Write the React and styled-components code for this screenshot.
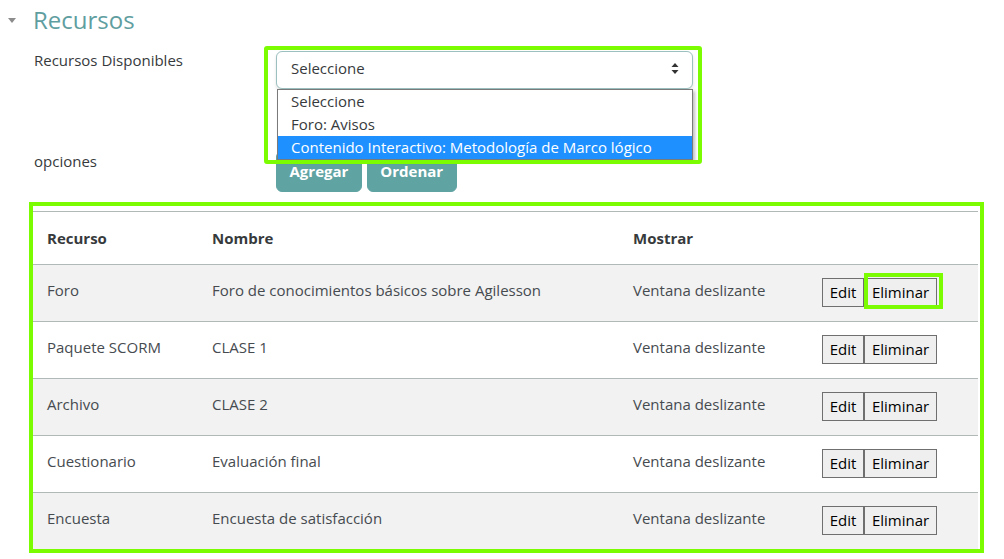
import React from "react";
import styled, { createGlobalStyle } from "styled-components";

const GREEN = "#7cfc00";
const TEAL = "#5fa3a3";
const LINE = "#b0b8b8";

const Global = createGlobalStyle`
  html, body { margin: 0; padding: 0; background: #fff; }
  body {
    font-family: "Open Sans", "Liberation Sans", sans-serif;
    font-size: 15px;
    line-height: 22.5px;
    color: #373a3c;
  }
  *, *::before, *::after { box-sizing: border-box; }
`;

const Page = styled.div`
  padding: 5px 0 0 8px;
  width: 1004px;
`;

const SectionHeader = styled.div`
  display: flex;
  align-items: center;
  height: 29px;
`;

const Caret = styled.span`
  width: 0;
  height: 0;
  border-left: 4.5px solid transparent;
  border-right: 4.5px solid transparent;
  border-top: 5px solid #8c8c8c;
  margin-right: 17px;
  margin-top: 1px;
`;

const Title = styled.h3`
  margin: 0;
  font-size: 24px;
  line-height: 29px;
  font-weight: 400;
  color: #5f9ea0;
`;

const FormRow = styled.div`
  display: grid;
  grid-template-columns: 242px 1fr;
  margin-left: 26px;
  margin-top: ${(p) => p.$mt}px;
`;

const Label = styled.div`
  padding-top: ${(p) => p.$pt || 0}px;
  color: #373a3c;
`;

const SelectWrap = styled.div`
  position: relative;
  width: 417px;
  margin-top: 2px;
  z-index: 2;
`;

const SelectBox = styled.div`
  height: 38px;
  border: 1px solid #9cc0c0;
  border-radius: 6px;
  background: #fff;
  box-shadow: 0 2px 3px rgba(0, 0, 0, 0.12);
  display: flex;
  align-items: center;
  justify-content: space-between;
  padding: 0 13px 3px 14px;
  color: #373a3c;
`;

const DropList = styled.ul`
  position: absolute;
  top: 38px;
  left: 1px;
  width: 416px;
  margin: 0;
  padding: 0;
  list-style: none;
  background: #fff;
  border: 1px solid #7a7a7a;
  box-shadow: 2px 2px 3px rgba(0, 0, 0, 0.25);
`;

const Option = styled.li`
  height: 23px;
  line-height: 22px;
  padding-left: 13px;
  background: ${(p) => (p.$active ? "#1e90ff" : "#fff")};
  color: ${(p) => (p.$active ? "#fff" : "#373a3c")};
  white-space: nowrap;
`;

const Highlight = styled.div`
  position: absolute;
  left: -12px;
  top: -5px;
  width: 438px;
  height: 118px;
  border: 4px solid ${GREEN};
  border-radius: 3px;
  pointer-events: none;
`;

const Actions = styled.div`
  display: flex;
  gap: 5px;
  margin-top: 1px;
`;

const ThemeButton = styled.button`
  font-family: inherit;
  font-size: 15px;
  font-weight: 700;
  line-height: 22.5px;
  color: #fff;
  background: ${TEAL};
  border: 1px solid ${TEAL};
  border-radius: 6px;
  padding: 8px 12.5px;
  cursor: pointer;
`;

const TableFrame = styled.div`
  margin: 10px 0 0 21px;
  width: 955px;
  border: 4px solid ${GREEN};
  padding: 5px 2px 0 0;
`;

const Row = styled.div`
  display: grid;
  grid-template-columns: 165px 421px 189px 1fr;
  border-top: 1px solid ${LINE};
  height: ${(p) => (p.$head ? 53 : 57)}px;
  background: ${(p) => (p.$shade ? "#f2f2f2" : "#fff")};
  font-weight: ${(p) => (p.$head ? 700 : 400)};
  color: ${(p) => (p.$head ? "#373a3c" : "#464b50")};
`;

const Cell = styled.div`
  padding: ${(p) => (p.$head ? 15 : 14)}px 14px 0;
  white-space: nowrap;
`;

const ButtonCell = styled.div`
  padding: 13px 14px 0;
  display: flex;
  align-items: flex-start;
`;

const BtnWrap = styled.span`
  position: relative;
  display: inline-flex;
  &::after {
    content: "";
    display: ${(p) => (p.$marked ? "block" : "none")};
    position: absolute;
    left: 0;
    top: -5px;
    width: 79px;
    height: 36px;
    border: 4px solid ${GREEN};
    pointer-events: none;
  }
`;

const SmallButton = styled.button`
  font-family: "Open Sans", "Liberation Sans", sans-serif;
  font-size: 15px;
  line-height: 20px;
  color: #000;
  background: #efefef;
  border: 1px solid #6f6f6f;
  border-radius: 0;
  height: 29px;
  width: ${(p) => p.$w}px;
  padding: 0;
  display: flex;
  align-items: center;
  justify-content: center;
`;

const rows = [
  ["Foro", "Foro de conocimientos básicos sobre Agilesson"],
  ["Paquete SCORM", "CLASE 1"],
  ["Archivo", "CLASE 2"],
  ["Cuestionario", "Evaluación final"],
  ["Encuesta", "Encuesta de satisfacción"],
];

const SortArrows = () => (
  <svg width="8" height="11" viewBox="0 0 8 11">
    <path d="M4 0 L7.5 4 L0.5 4 Z" fill="#333" />
    <path d="M4 11 L7.5 7 L0.5 7 Z" fill="#333" />
  </svg>
);

export default function App() {
  return (
    <>
      <Global />
      <Page>
        <SectionHeader>
          <Caret />
          <Title>Recursos</Title>
        </SectionHeader>

        <FormRow $mt={15}>
          <Label>Recursos Disponibles</Label>
          <SelectWrap>
            <SelectBox>
              <span>Seleccione</span>
              <SortArrows />
            </SelectBox>
            <DropList>
              <Option>Seleccione</Option>
              <Option>Foro: Avisos</Option>
              <Option $active>Contenido Interactivo: Metodología de Marco lógico</Option>
            </DropList>
            <Highlight />
          </SelectWrap>
        </FormRow>

        <FormRow $mt={61}>
          <Label $pt={0}>opciones</Label>
          <Actions>
            <ThemeButton>Agregar</ThemeButton>
            <ThemeButton>Ordenar</ThemeButton>
          </Actions>
        </FormRow>

        <TableFrame>
          <Row $head>
            <Cell $head>Recurso</Cell>
            <Cell $head>Nombre</Cell>
            <Cell $head>Mostrar</Cell>
            <Cell $head />
          </Row>
          {rows.map(([tipo, nombre], i) => (
            <Row key={tipo} $shade={i % 2 === 0}>
              <Cell>{tipo}</Cell>
              <Cell>{nombre}</Cell>
              <Cell>Ventana deslizante</Cell>
              <ButtonCell>
                <SmallButton $w={42}>Edit</SmallButton>
                <BtnWrap $marked={i === 0}>
                  <SmallButton $w={73}>Eliminar</SmallButton>
                </BtnWrap>
              </ButtonCell>
            </Row>
          ))}
        </TableFrame>
      </Page>
    </>
  );
}
